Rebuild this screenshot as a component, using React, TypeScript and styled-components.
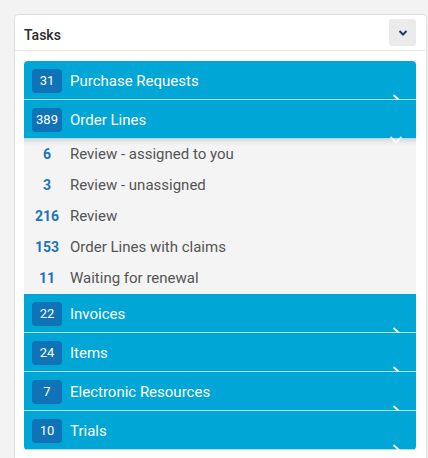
import React from "react";
import styled, { createGlobalStyle } from "styled-components";

const GlobalStyle = createGlobalStyle`
  body {
    margin: 0;
    background: #f3f3f3;
    font-family: Roboto, "Liberation Sans", sans-serif;
  }
`;

const Card = styled.div`
  margin: 14px 0 0 14px;
  width: 413px;
  height: 460px;
  box-sizing: border-box;
  background: #fff;
  border: 1px solid #dedede;
  border-radius: 4px;
`;

const CardHeader = styled.div`
  height: 35px;
  display: flex;
  align-items: center;
  justify-content: space-between;
  padding: 0 10px 0 9px;
  border-bottom: 1px solid #e6e6e6;
`;

const Title = styled.div`
  padding-top: 5px;
  font-size: 14px;
  font-weight: 500;
  color: #2b2b2b;
`;

const ToggleButton = styled.button`
  width: 27px;
  height: 27px;
  border: none;
  border-radius: 3px;
  background: #ebebeb;
  display: flex;
  align-items: center;
  justify-content: center;
  padding: 0;
`;

const CardBody = styled.div`
  padding: 10px 10px 10px 9px;
`;

const List = styled.div`
  border-radius: 4px;
  overflow: hidden;
`;

const Header = styled.div`
  position: relative;
  height: 39px;
  box-sizing: border-box;
  padding-top: 2px;
  display: flex;
  align-items: center;
  background: #00a6d6;
  border-bottom: 1px solid #a8e1f3;
  color: #fff;
  font-size: 15px;
`;

const Badge = styled.span`
  width: 30px;
  height: 24px;
  margin: -1px 8px 0;
  border-radius: 4px;
  background: #1072b7;
  display: flex;
  align-items: center;
  justify-content: center;
  font-size: 13px;
`;

const Chevron = styled.svg<{ $open?: boolean }>`
  position: absolute;
  right: ${(p) => (p.$open ? 13 : 15)}px;
  top: ${(p) => (p.$open ? 36 : 33)}px;
`;

const Panel = styled.div`
  background: #f4f4f4;
  box-shadow: inset 0 7px 6px -6px rgba(0, 0, 0, 0.18);
`;

const SubRow = styled.div`
  height: 31px;
  display: flex;
  align-items: center;
  padding-bottom: 2px;
  box-sizing: border-box;
  font-size: 15px;
  color: #555;
`;

const SubCount = styled.span`
  width: 46px;
  text-align: center;
  font-size: 14px;
  font-weight: 700;
  color: #1b74bd;
`;

type Group = { count: number; label: string; open?: boolean; items?: [number, string][] };

const groups: Group[] = [
  { count: 31, label: "Purchase Requests" },
  {
    count: 389,
    label: "Order Lines",
    open: true,
    items: [
      [6, "Review - assigned to you"],
      [3, "Review - unassigned"],
      [216, "Review"],
      [153, "Order Lines with claims"],
      [11, "Waiting for renewal"],
    ],
  },
  { count: 22, label: "Invoices" },
  { count: 24, label: "Items" },
  { count: 7, label: "Electronic Resources" },
  { count: 10, label: "Trials" },
];

function GroupRow({ group }: { group: Group }) {
  return (
    <>
      <Header>
        <Badge>{group.count}</Badge>
        {group.label}
        {group.open ? (
          <Chevron $open width="14" height="8" viewBox="0 0 14 8">
            <path d="M1.5 1 7 6.5 12.5 1" fill="none" stroke="#fff" strokeWidth="1.8" />
          </Chevron>
        ) : (
          <Chevron width="9" height="12" viewBox="0 0 9 12">
            <path d="M1.5 1 7 6 1.5 11" fill="none" stroke="#fff" strokeWidth="1.8" />
          </Chevron>
        )}
      </Header>
      {group.open && (
        <Panel>
          {group.items?.map(([n, text]) => (
            <SubRow key={text}>
              <SubCount>{n}</SubCount>
              {text}
            </SubRow>
          ))}
        </Panel>
      )}
    </>
  );
}

export default function App() {
  return (
    <>
      <GlobalStyle />
      <Card>
        <CardHeader>
          <Title>Tasks</Title>
          <ToggleButton>
            <svg width="10" height="6" viewBox="0 0 10 6">
              <path d="M1.5 1 5 4.5 8.5 1" fill="none" stroke="#1d3a6c" strokeWidth="2" />
            </svg>
          </ToggleButton>
        </CardHeader>
        <CardBody>
          <List>
            {groups.map((g) => (
              <GroupRow key={g.label} group={g} />
            ))}
          </List>
        </CardBody>
      </Card>
    </>
  );
}
